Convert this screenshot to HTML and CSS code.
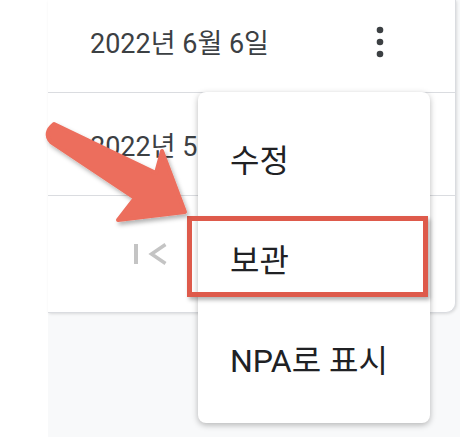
FILE: index.html
```html
<!DOCTYPE html>
<html lang="ko">
  <head>
    <meta charset="UTF-8" />
    <meta name="viewport" content="width=device-width, initial-scale=1.0" />
    <title>보관 메뉴</title>
    <link rel="stylesheet" href="styles.css">
  </head>
  <body>
    <div class="page">
      <aside class="rail"></aside>

      <main class="main">
        <div class="card">
          <div class="row row-first">
            <span class="date">2022년 6월 6일</span>
            <button class="kebab" aria-label="더보기">
              <svg width="8" height="32" viewBox="0 0 8 32">
                <circle cx="4" cy="4" r="3.3" />
                <circle cx="4" cy="16" r="3.3" />
                <circle cx="4" cy="28" r="3.3" />
              </svg>
            </button>
          </div>
          <div class="row">
            <!-- hidden behind the open menu -->
            <span class="date date-under">2022년 5</span>
          </div>
          <div class="pager">
            <svg class="first-page" width="34" height="24" viewBox="0 0 34 24">
              <rect x="0" y="2" width="4" height="20" />
              <polyline points="31.5,2.5 17.5,12 31.5,21.5" />
            </svg>
          </div>
        </div>
      </main>

      <!-- context menu -->
      <ul class="menu">
        <li class="menu-item">수정</li>
        <li class="menu-item">보관</li>
        <li class="menu-item">NPA로 표시</li>
      </ul>

      <!-- annotation -->
      <div class="highlight"></div>
      <svg class="arrow" width="200" height="240" viewBox="0 0 200 240">
        <defs>
          <filter id="shade" x="-20%" y="-20%" width="140%" height="140%">
            <feDropShadow dx="2" dy="3" stdDeviation="2" flood-color="#000" flood-opacity="0.3" />
          </filter>
        </defs>
        <path
          d="M54 124 L156 173 L162 151 L185 212 L118 220 L135 198 L51 142 Q43 133 54 124 Z"
          fill="#ec6e5d"
          stroke="#ec6e5d"
          stroke-width="4"
          stroke-linejoin="round"
          filter="url(#shade)"
        />
      </svg>
    </div>
  </body>
</html>
```

FILE: styles.css
```css
body {
  margin: 0;
  font-family: Roboto, "Noto Sans CJK KR", sans-serif;
  overflow: hidden;
}
.page {
  position: relative;
  display: flex;
  width: 460px;
  height: 437px;
  background: #f8f9fa;
}
.rail {
  width: 48px;
  background: #fff;
}
.main {
  flex: 1;
}
.card {
  width: 407px;
  background: #fff;
  border-right: 1px solid #dadce0;
  border-bottom: 1px solid #dadce0;
  border-radius: 0 0 10px 0;
  box-shadow: 1px 1px 3px rgba(0, 0, 0, 0.12);
}
.row {
  display: flex;
  align-items: center;
  height: 102px;
  padding-left: 42px;
  border-bottom: 1px solid #dadce0;
}
.row-first {
  box-sizing: border-box;
  height: 93px;
  padding-bottom: 9px;
}
.date {
  width: 286px;
  font-size: 27px;
  color: #3c4043;
}
.date-under {
  width: auto;
  white-space: nowrap;
}
.kebab {
  display: flex;
  padding: 0;
  border: none;
  background: none;
  fill: #3c4043;
}
.pager {
  display: flex;
  align-items: center;
  height: 116px;
  padding-left: 86px;
}
.first-page rect {
  fill: #c4c4c4;
}
.first-page polyline {
  fill: none;
  stroke: #c4c4c4;
  stroke-width: 3.5;
}
.menu {
  position: absolute;
  left: 198px;
  top: 92px;
  width: 232px;
  margin: 0;
  padding: 16px 0 15px;
  list-style: none;
  background: #fff;
  border-radius: 8px;
  box-shadow: 0 2px 6px rgba(0, 0, 0, 0.28);
}
.menu-item {
  display: flex;
  align-items: center;
  height: 100px;
  padding-left: 32px;
  font-size: 32px;
  color: #202124;
}
.highlight {
  position: absolute;
  left: 187px;
  top: 216px;
  width: 231px;
  height: 71px;
  border: 5px solid #de5a4b;
  box-shadow: 2px 3px 4px rgba(0, 0, 0, 0.3);
}
.arrow {
  position: absolute;
  left: 0;
  top: 0;
}
```
